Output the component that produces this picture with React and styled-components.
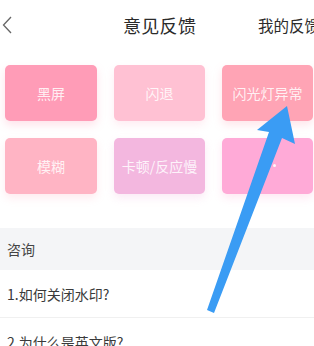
import styled, { createGlobalStyle } from 'styled-components';

const GlobalStyle = createGlobalStyle`
  html, body {
    margin: 0;
    padding: 0;
    background: #ffffff;
  }
  body {
    font-family: "Noto Sans CJK SC", "Noto Sans", sans-serif;
    color: #333333;
  }
`;

const Page = styled.div`
  position: relative;
  width: 314px;
  height: 346px;
  overflow: hidden;
  background: #ffffff;
`;

const Header = styled.div`
  display: flex;
  align-items: center;
  height: 50px;
  padding-left: 2px;
`;

const BackButton = styled.div`
  display: flex;
  align-items: center;
  width: 121px;
  height: 50px;
  padding-bottom: 2px;
  box-sizing: border-box;
`;

const Title = styled.div`
  font-size: 18px;
  color: #2b2b2b;
  white-space: nowrap;
  letter-spacing: 0.3px;
`;

const HeaderLink = styled.div`
  margin-left: auto;
  margin-right: -6px;
  font-size: 15.5px;
  color: #2b2b2b;
  white-space: nowrap;
`;

const TileGrid = styled.div`
  display: grid;
  grid-template-columns: 92px 91px 91px;
  grid-auto-rows: 56px;
  column-gap: 17px;
  row-gap: 17px;
  padding: 15px 0 0 5px;
`;

const Tile = styled.div`
  display: flex;
  align-items: center;
  justify-content: center;
  border-radius: 5px;
  background: ${p => p.color};
  box-shadow: 0 4px 8px ${p => p.shadow};
  color: rgba(255, 255, 255, 0.85);
  font-size: 14px;
  white-space: nowrap;
`;

const Dot = styled.span`
  width: 3px;
  height: 3px;
  margin: 0 0 2px 14px;
  border-radius: 50%;
  background: rgba(255, 255, 255, 0.9);
`;

const Section = styled.div`
  margin-top: 34px;
`;

const SectionHead = styled.div`
  display: flex;
  align-items: center;
  height: 42px;
  padding-left: 7px;
  background: #f4f5f7;
  font-size: 14px;
  color: #444444;
`;

const Row = styled.div`
  display: flex;
  align-items: center;
  height: 47px;
  padding-left: 7px;
  border-bottom: 1px solid ${p => (p.$last ? 'transparent' : '#f0f0f0')};
  font-size: 14px;
  color: #3a3a3a;
`;

const Overlay = styled.svg`
  position: absolute;
  left: 0;
  top: 0;
  pointer-events: none;
`;

const tiles = [
  { label: '黑屏', color: '#ff9cb7', shadow: 'rgba(255, 140, 170, 0.25)' },
  { label: '闪退', color: '#ffc1d3', shadow: 'rgba(255, 170, 195, 0.22)' },
  { label: '闪光灯异常', color: '#ffa4b5', shadow: 'rgba(255, 150, 170, 0.25)' },
  { label: '模糊', color: '#ffb4c4', shadow: 'rgba(255, 160, 180, 0.22)' },
  { label: '卡顿/反应慢', color: '#f3b7df', shadow: 'rgba(235, 160, 210, 0.22)' },
  { label: '', color: '#ffaad7', shadow: 'rgba(255, 150, 200, 0.22)' },
];

const questions = ['1.如何关闭水印?', '2.为什么是英文版?'];

const App = () => {
  return (
    <Page>
      <GlobalStyle />
      <Header>
        <BackButton>
          <svg width="12" height="20" viewBox="0 0 12 20">
            <polyline
              points="9,3 1.5,11 9,19"
              fill="none"
              stroke="#666666"
              strokeWidth="1.3"
            />
          </svg>
        </BackButton>
        <Title>意见反馈</Title>
        <HeaderLink>我的反馈</HeaderLink>
      </Header>

      <TileGrid>
        {tiles.map((t, i) => (
          <Tile key={i} color={t.color} shadow={t.shadow}>
            {t.label || <Dot />}
          </Tile>
        ))}
      </TileGrid>

      <Section>
        <SectionHead>咨询</SectionHead>
        {questions.map((q, i) => (
          <Row key={q} $last={i === questions.length - 1}>
            {q}
          </Row>
        ))}
      </Section>

      {/* annotation arrow */}
      <Overlay width="314" height="346" viewBox="0 0 314 346">
        <polygon
          points="287,106 295,144 282,138 214,313 207,310 269,132 257,130"
          fill="#3a9cf4"
        />
      </Overlay>
    </Page>
  );
};

export default App;
